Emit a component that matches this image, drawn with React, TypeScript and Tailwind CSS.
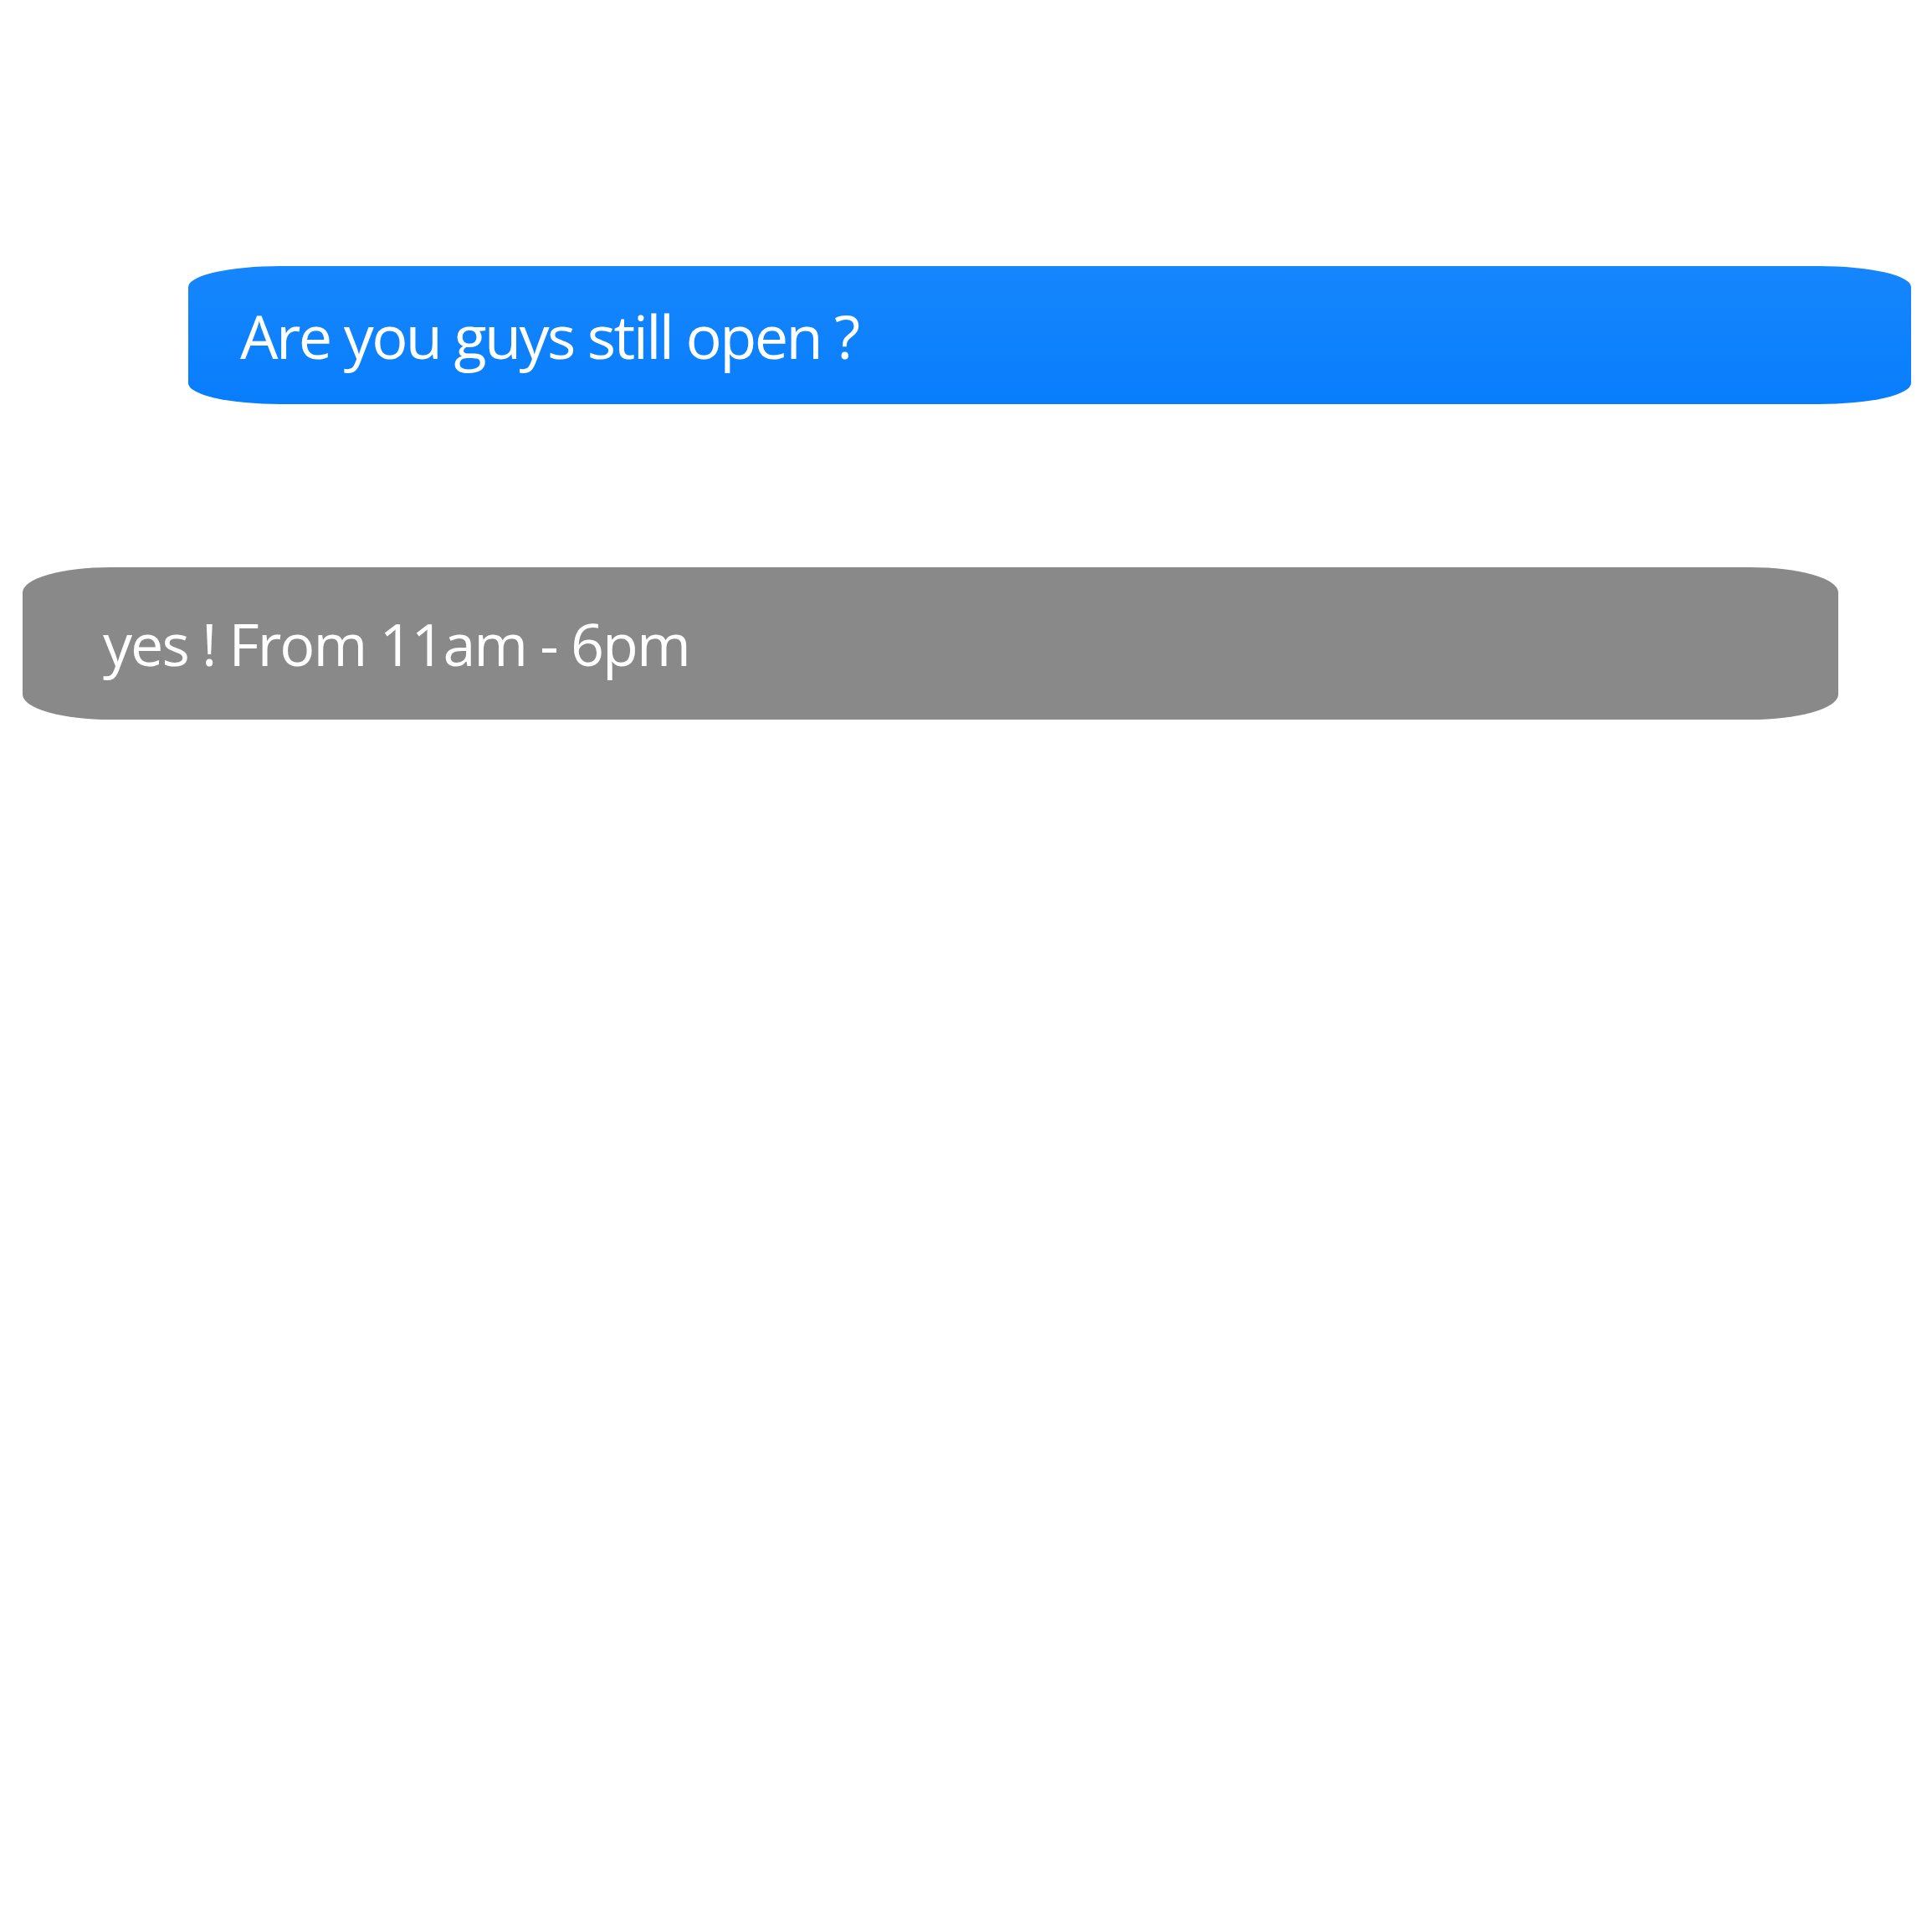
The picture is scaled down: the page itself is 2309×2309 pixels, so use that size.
const App = () => {
  return (
    <main
      className="min-h-[2309px] w-[2309px] bg-white pt-[318px]"
      style={{ fontFamily: '"Open Sans", "Noto Sans", sans-serif' }}
    >
      <div className="flex flex-col">
        <div className="ml-[225px] flex h-[165px] w-[2059px] items-center rounded-[110px/25px] bg-gradient-to-b from-[#1586fc] to-[#087dfc] pl-[62px]">
          <p className="text-[72px] leading-none tracking-[-2.6px] text-white">Are you guys still open ?</p>
        </div>

        <div className="ml-[27px] mt-[195px] flex h-[182px] w-[2170px] items-center rounded-[105px/30px] bg-[#898989] pl-[96px]">
          <p className="text-[70px] leading-none tracking-[-2px] text-white">yes ! From 11am - 6pm</p>
        </div>
      </div>
    </main>
  );
};

export default App;
